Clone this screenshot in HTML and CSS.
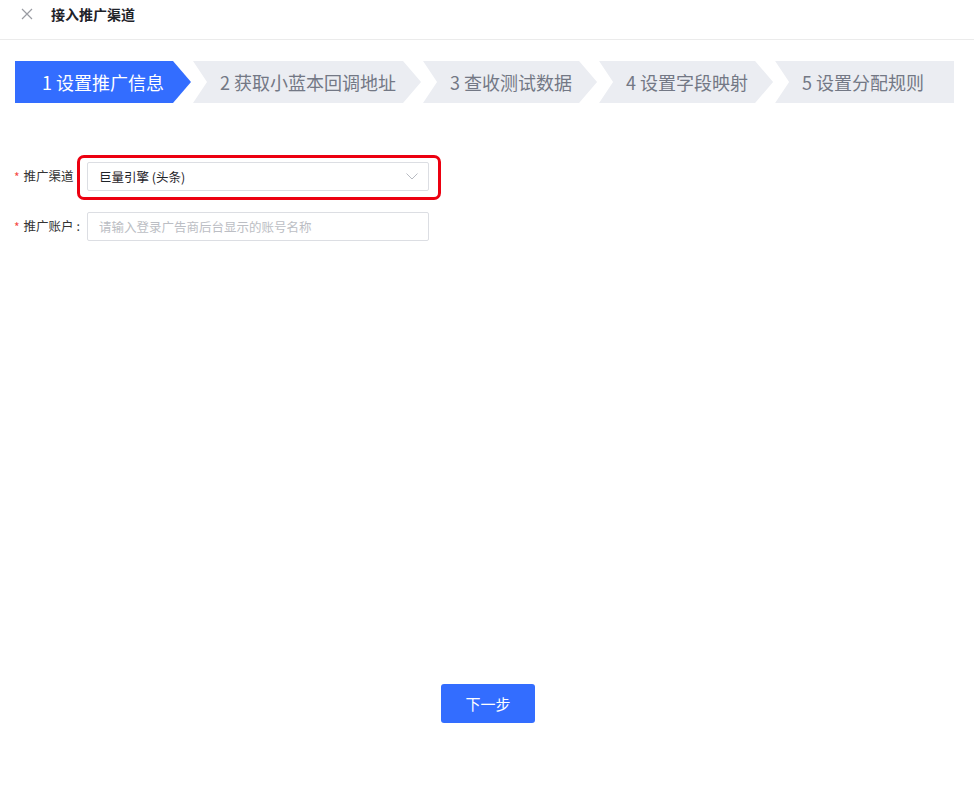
FILE: index.html
```html
<!DOCTYPE html>
<html lang="zh-CN">
<head>
<meta charset="utf-8">
<title>接入推广渠道</title>
<link rel="stylesheet" href="styles.css">
</head>
<body>
<div class="page">
  <header class="header">
    <span class="close">
      <svg width="12" height="12" viewBox="0 0 12 12"><path d="M1 1L11 11M11 1L1 11" stroke="#9a9ca3" stroke-width="1.2" fill="none"/></svg>
    </span>
    <span class="title">接入推广渠道</span>
  </header>

  <div class="steps">
    <div class="step first active">1 设置推广信息</div>
    <div class="step">2 获取小蓝本回调地址</div>
    <div class="step">3 查收测试数据</div>
    <div class="step">4 设置字段映射</div>
    <div class="step last">5 设置分配规则</div>
  </div>

  <form class="form">
    <div class="row">
      <label class="label"><span class="req">*</span>推广渠道 :</label>
      <div class="field highlighted">
        <div class="select">
          <span class="value">巨量引擎 (头条)</span>
          <svg class="arrow" width="12" height="7" viewBox="0 0 12 7"><path d="M0.5 0.5L6 6L11.5 0.5" stroke="#b8bbc2" stroke-width="1" fill="none"/></svg>
        </div>
        <span class="mark"></span>
      </div>
    </div>
    <div class="row">
      <label class="label"><span class="req">*</span>推广账户 :</label>
      <div class="field">
        <div class="input"><span class="placeholder">请输入登录广告商后台显示的账号名称</span></div>
      </div>
    </div>
  </form>

  <div class="actions">
    <button class="btn" type="button">下一步</button>
  </div>
</div>
</body>
</html>
```
FILE: styles.css
```css
* { box-sizing: border-box; }
html, body { margin: 0; padding: 0; background: #fff; }
body {
  font-family: "PingFang SC", "Noto Sans CJK SC", "Noto Sans", sans-serif;
  color: #1f2329;
}
.page { width: 974px; height: 787px; }

.header {
  height: 40px;
  border-bottom: 1px solid #ebebeb;
  display: flex;
  align-items: flex-start;
  padding: 4px 0 0 21px;
}
.close { width: 12px; height: 20px; display: flex; align-items: center; }
.close svg { display: block; }
.title {
  margin-left: 18px;
  font-size: 14px;
  line-height: 20px;
  font-weight: 600;
  color: #1f2329;
}

.steps {
  display: flex;
  gap: 2px;
  margin: 21px 20px 0 15px;
  height: 42px;
}
.step {
  flex: none;
  height: 42px;
  line-height: 42px;
  padding: 0 25px 0 27px;
  font-size: 18px;
  color: #737885;
  background: #ebedf2;
  white-space: nowrap;
  clip-path: polygon(0 0, calc(100% - 18px) 0, 100% 50%, calc(100% - 18px) 100%, 0 100%, 14px 50%);
}
.step.first {
  width: 176px;
  clip-path: polygon(0 0, calc(100% - 18px) 0, 100% 50%, calc(100% - 18px) 100%, 0 100%);
}
.step.last {
  flex: 1;
  clip-path: polygon(0 0, 100% 0, 100% 100%, 0 100%, 14px 50%);
}
.step.active { background: #336dff; color: #fff; }

.form { margin-top: 59px; }
.row { display: flex; align-items: center; height: 29px; margin-bottom: 21px; }
.label {
  width: 87px;
  padding-left: 14px;
  font-size: 12.5px;
  color: #333;
  white-space: nowrap;
  display: flex;
  align-items: center;
  position: relative;
  top: -1px;
}
.req { color: #f54a45; font-size: 12px; margin-right: 4px; position: relative; top: 1px; }
.field { position: relative; width: 342px; height: 29px; }
.select, .input {
  width: 100%;
  height: 29px;
  border: 1px solid #dcdee3;
  border-radius: 2px;
  display: flex;
  align-items: center;
  padding: 0 10px 0 11px;
  font-size: 12.5px;
}
.select { justify-content: space-between; }
.value { color: #1f2329; }
.placeholder { color: #bcbec4; }
.mark {
  position: absolute;
  left: -10px;
  top: -7px;
  width: 364px;
  height: 45px;
  border: 3px solid #ec0010;
  border-radius: 7px;
  pointer-events: none;
}

.actions { display: flex; justify-content: center; margin-top: 443px; padding-left: 2px; }
.btn {
  width: 94px;
  height: 39px;
  border: none;
  border-radius: 3px;
  background: #336dff;
  color: #fff;
  font-family: inherit;
  font-size: 15px;
  cursor: pointer;
}
```
